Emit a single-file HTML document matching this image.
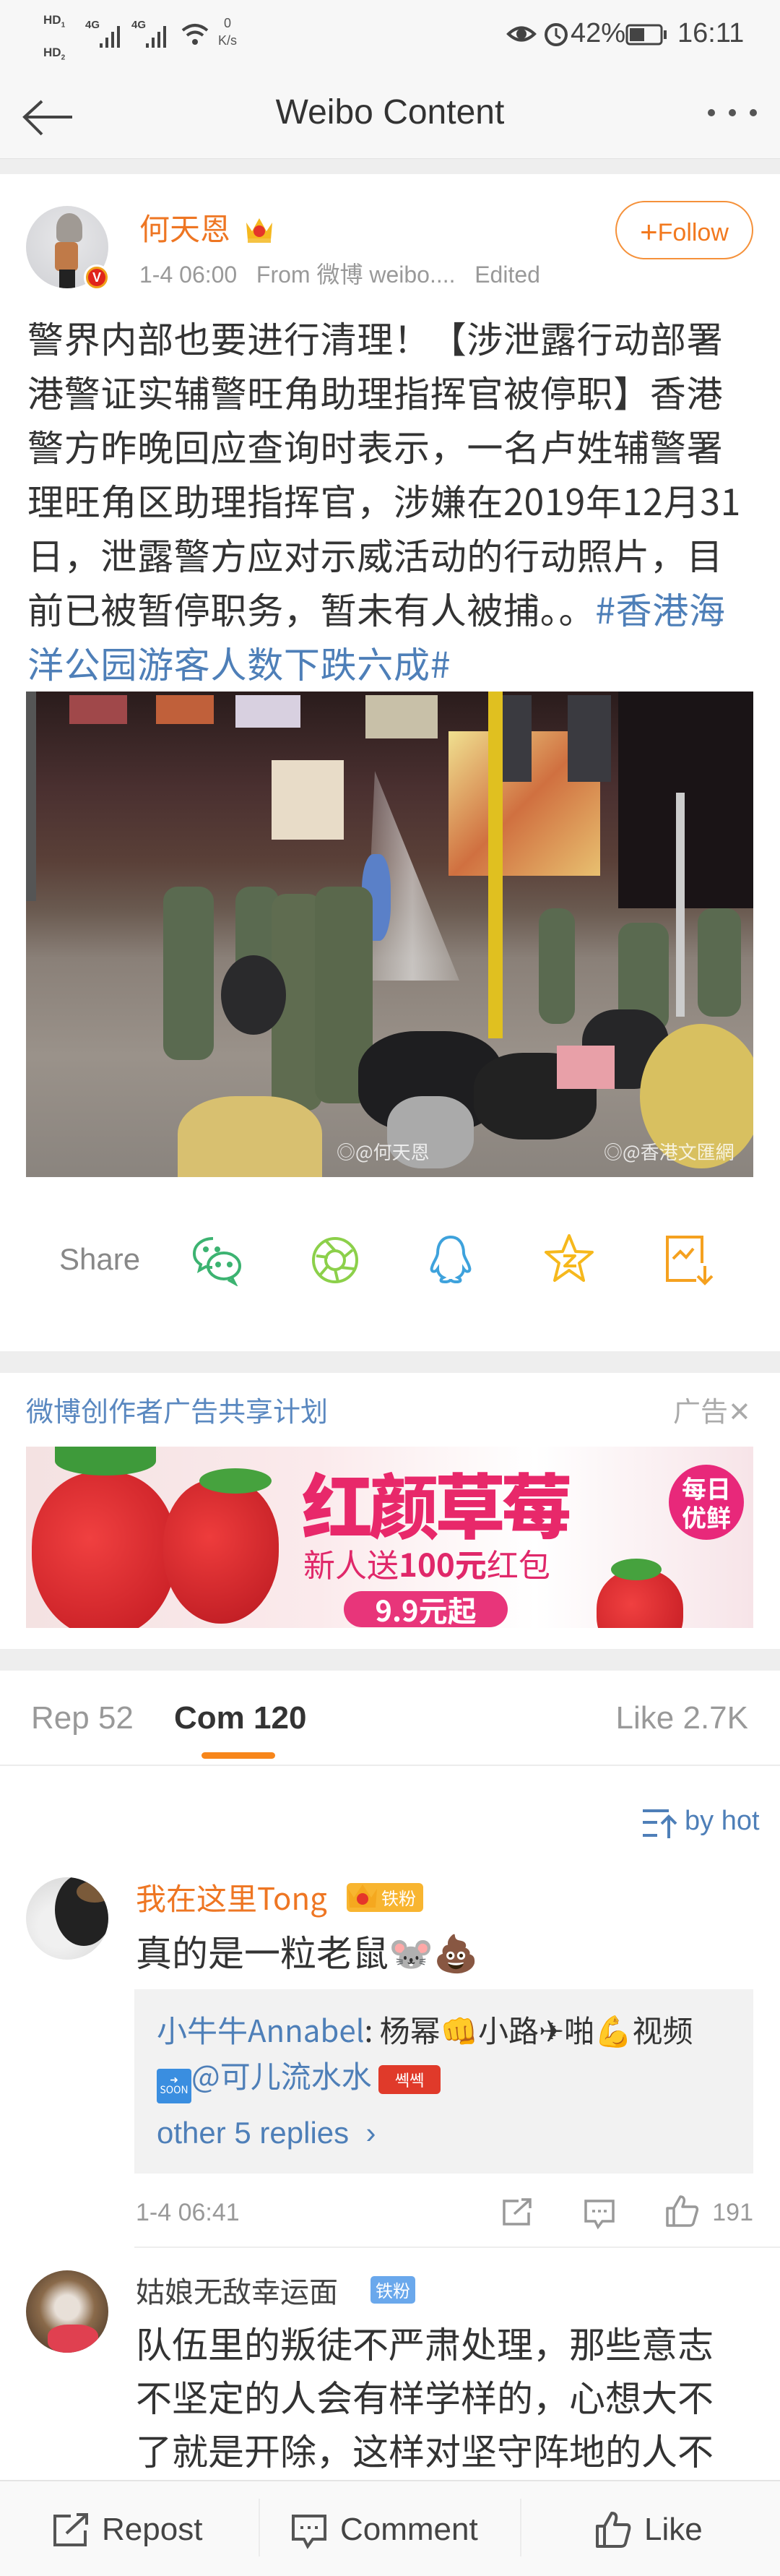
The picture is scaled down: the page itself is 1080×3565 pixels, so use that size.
<!DOCTYPE html>
<html><head><meta charset="utf-8">
<style>
*{margin:0;padding:0;box-sizing:border-box}
body{width:1080px;height:3565px;position:relative;background:#fff;font-family:"Liberation Sans","Noto Sans CJK SC",sans-serif;color:#333;overflow:hidden}
.a{position:absolute;white-space:nowrap}
.cjk{font-family:"Noto Sans CJK SC","Liberation Sans",sans-serif}
</style></head><body>
<!-- status + nav -->
<div class="a" style="left:0;top:0;width:1080px;height:220px;background:#f7f7f7"></div>
<div class="a" style="left:0;top:219px;width:1080px;height:22px;background:#eeeeee;border-top:1px solid #e2e2e2"></div>
<div class="a" style="left:60px;top:18px;font-size:17px;font-weight:bold;color:#444;line-height:20px">HD<sub style="font-size:10px">1</sub><br><span style="position:relative;top:18px">HD<sub style="font-size:10px">2</sub></span></div>
<div class="a" style="left:118px;top:26px;font-size:15px;color:#444;font-weight:bold">4G</div>
<svg class="a" style="left:136px;top:30px" width="40" height="40"><rect x="2" y="30" width="4" height="6" fill="#444"/><rect x="10" y="22" width="4" height="14" fill="#444"/><rect x="18" y="14" width="4" height="22" fill="#444"/><rect x="26" y="6" width="4" height="30" fill="#444"/></svg>
<div class="a" style="left:182px;top:26px;font-size:15px;color:#444;font-weight:bold">4G</div>
<svg class="a" style="left:200px;top:30px" width="40" height="40"><rect x="2" y="30" width="4" height="6" fill="#444"/><rect x="10" y="22" width="4" height="14" fill="#444"/><rect x="18" y="14" width="4" height="22" fill="#444"/><rect x="26" y="6" width="4" height="30" fill="#444"/></svg>
<svg class="a" style="left:250px;top:28px" width="40" height="40"><path d="M3 14 Q20 0 37 14" stroke="#444" stroke-width="4" fill="none"/><path d="M9 21 Q20 12 31 21" stroke="#444" stroke-width="4" fill="none"/><circle cx="20" cy="30" r="4" fill="#444"/></svg>
<div class="a" style="left:302px;top:20px;font-size:18px;color:#555;line-height:24px;text-align:center">0<br>K/s</div>
<svg class="a" style="left:700px;top:30px" width="44" height="34"><path d="M4 17 Q22 0 40 17 Q22 34 4 17Z" stroke="#444" stroke-width="4" fill="none"/><circle cx="22" cy="17" r="7" fill="#444"/></svg>
<svg class="a" style="left:750px;top:26px" width="40" height="40"><circle cx="20" cy="22" r="14" stroke="#444" stroke-width="4" fill="none"/><path d="M20 13v10l6 4" stroke="#444" stroke-width="3" fill="none"/></svg>
<div class="a" style="left:790px;top:25px;font-size:38px;color:#444;line-height:42px">42%</div>
<svg class="a" style="left:866px;top:33px" width="58" height="30"><rect x="2" y="2" width="48" height="26" rx="4" stroke="#444" stroke-width="3" fill="none"/><rect x="6" y="6" width="20" height="18" fill="#444"/><rect x="53" y="9" width="4" height="12" fill="#444"/></svg>
<div class="a" style="left:938px;top:25px;font-size:38px;color:#444;line-height:42px">16:11</div>
<svg class="a" style="left:28px;top:130px" width="80" height="64"><path d="M72 26H6M30 4L6 26L30 50" stroke="#444" stroke-width="4" fill="none" transform="translate(0,6)"/></svg>
<div class="a" style="left:0;width:1080px;text-align:center;top:128px;font-size:48px;line-height:56px;color:#333">Weibo Content</div>
<svg class="a" style="left:975px;top:147px" width="80" height="20"><circle cx="10" cy="9" r="5" fill="#555"/><circle cx="39" cy="9" r="5" fill="#555"/><circle cx="68" cy="9" r="5" fill="#555"/></svg>

<!-- post header -->
<div class="a" style="left:36px;top:285px;width:114px;height:114px;border-radius:50%;background:radial-gradient(circle at 50% 40%,#e8e8ea,#cfd0d4);overflow:hidden">
<div class="a" style="left:42px;top:10px;width:36px;height:40px;border-radius:50% 50% 20% 20%;background:#a09a94"></div>
<div class="a" style="left:40px;top:50px;width:32px;height:40px;background:#c07a48;border-radius:6px"></div>
<div class="a" style="left:46px;top:88px;width:22px;height:26px;background:#222"></div>
</div>
<div class="a" style="left:116px;top:366px;width:36px;height:36px;border-radius:50%;background:#f0a11b;border:3px solid #fff"><div style="margin:3px;width:24px;height:24px;border-radius:50%;background:#e0251b;color:#fff;font-size:18px;font-weight:bold;text-align:center;line-height:24px">V</div></div>
<div class="a cjk" style="left:193px;top:287px;font-size:42px;line-height:56px;color:#ee7623">何天恩</div>
<svg class="a" style="left:337px;top:296px" width="44" height="42"><path d="M4 12L12 24L22 6L32 24L40 12L38 36H6Z" fill="#f5b81f"/><circle cx="22" cy="24" r="8" fill="#e5352a"/><rect x="6" y="34" width="32" height="6" fill="#f5c342"/></svg>
<div class="a" style="left:852px;top:278px;width:191px;height:81px;border:2px solid #f5913a;border-radius:41px;color:#f2791f;font-size:34px;line-height:77px;text-align:center"><span style="font-size:42px;position:relative;top:2px">+</span>Follow</div>
<div class="a" style="left:193px;top:357px;font-size:32px;line-height:42px;color:#999">1-4 06:00&nbsp;&nbsp;&nbsp;From <span class="cjk">微博</span> weibo....&nbsp;&nbsp;&nbsp;Edited</div>

<!-- body -->
<div class="a cjk" style="left:38px;top:430px;font-size:50px;line-height:75px;letter-spacing:0.7px;color:#333">
<div>警界内部也要进行清理！【涉泄露行动部署</div>
<div>港警证实辅警旺角助理指挥官被停职】香港</div>
<div>警方昨晚回应查询时表示，一名卢姓辅警署</div>
<div>理旺角区助理指挥官，涉嫌在2019年12月31</div>
<div>日，泄露警方应对示威活动的行动照片，目</div>
<div>前已被暂停职务，暂未有人被捕。。<span style="color:#4e7fb8">#香港海</span></div>
<div style="color:#4e7fb8">洋公园游客人数下跌六成#</div>
</div>

<!-- photo -->
<div class="a" style="left:36px;top:957px;width:1007px;height:672px;overflow:hidden;background:linear-gradient(180deg,#2a1c1c 0%,#4a3030 20%,#5a4038 35%,#6a5a50 45%,#8a8078 55%,#9a928a 75%,#8a847e 100%)">
<div class="a" style="left:60px;top:5px;width:80px;height:40px;background:#a0484a"></div>
<div class="a" style="left:180px;top:5px;width:80px;height:40px;background:#c0603a"></div>
<div class="a" style="left:290px;top:5px;width:90px;height:45px;background:#d8d0e0"></div>
<div class="a" style="left:470px;top:5px;width:100px;height:60px;background:#c8c0a8"></div>
<div class="a" style="left:340px;top:95px;width:100px;height:110px;background:#e8dcc8"></div>
<div class="a" style="left:585px;top:55px;width:210px;height:200px;background:linear-gradient(135deg,#f0e090,#d07040,#e8c070)"></div>
<div class="a" style="left:650px;top:5px;width:50px;height:120px;background:#3a3a40"></div>
<div class="a" style="left:750px;top:5px;width:60px;height:120px;background:#3a3a40"></div>
<div class="a" style="left:820px;top:0;width:190px;height:300px;background:#1a1416"></div>
<div class="a" style="left:470px;top:110px;width:130px;height:290px;background:linear-gradient(90deg,rgba(240,240,240,.2),rgba(240,240,240,.6),rgba(240,240,240,.2));clip-path:polygon(10% 0,100% 100%,0 100%)"></div>
<div class="a" style="left:465px;top:225px;width:40px;height:120px;background:#5a80c8;border-radius:40%"></div>
<div class="a" style="left:640px;top:0;width:20px;height:480px;background:#e0c020"></div>
<div class="a" style="left:0;top:0;width:14px;height:290px;background:#555"></div>
<div class="a" style="left:900px;top:140px;width:12px;height:310px;background:#ccc"></div>
<div class="a" style="left:190px;top:270px;width:70px;height:240px;background:#5a6a50;border-radius:20px"></div>
<div class="a" style="left:290px;top:270px;width:60px;height:180px;background:#5a6a50;border-radius:20px"></div>
<div class="a" style="left:340px;top:280px;width:70px;height:300px;background:#5f6c50;border-radius:20px"></div>
<div class="a" style="left:400px;top:270px;width:80px;height:300px;background:#5a684c;border-radius:20px"></div>
<div class="a" style="left:270px;top:365px;width:90px;height:110px;background:#2a2a2c;border-radius:50%"></div>
<div class="a" style="left:710px;top:300px;width:50px;height:160px;background:#5a6a50;border-radius:20px"></div>
<div class="a" style="left:820px;top:320px;width:70px;height:150px;background:#5a6a50;border-radius:20px"></div>
<div class="a" style="left:930px;top:300px;width:60px;height:150px;background:#5a6a50;border-radius:20px"></div>
<div class="a" style="left:460px;top:470px;width:200px;height:140px;background:#1e1e20;border-radius:40%"></div>
<div class="a" style="left:620px;top:500px;width:170px;height:120px;background:#222;border-radius:40%"></div>
<div class="a" style="left:770px;top:440px;width:120px;height:110px;background:#262628;border-radius:40%"></div>
<div class="a" style="left:500px;top:560px;width:120px;height:100px;background:#aaa;border-radius:40%"></div>
<div class="a" style="left:735px;top:490px;width:80px;height:60px;background:#e8a0a8"></div>
<div class="a" style="left:850px;top:460px;width:170px;height:200px;background:#d8c060;border-radius:50%"></div>
<div class="a" style="left:210px;top:560px;width:200px;height:130px;background:#d8c070;border-radius:40% 40% 0 0"></div>
<div class="a cjk" style="left:430px;top:618px;font-size:26px;color:rgba(255,255,255,.8)">◎@何天恩</div>
<div class="a cjk" style="left:800px;top:618px;font-size:26px;color:rgba(255,255,255,.8)">◎@香港文匯網</div>
</div>

<!-- share row -->
<div class="a" style="left:82px;top:1718px;font-size:42px;line-height:50px;color:#888">Share</div>
<svg class="a" style="left:265px;top:1708px" width="72" height="72" fill="none" stroke="#3cb371" stroke-width="4"><path d="M30 6C15 6 4 15 4 27c0 7 4 12 9 15l-2 8 9-5c3 1 6 1 9 1"/><ellipse cx="45" cy="44" rx="22" ry="18"/><path d="M56 60l4 8-9-5"/><circle cx="20" cy="21" r="2" fill="#3cb371"/><circle cx="36" cy="21" r="2" fill="#3cb371"/><circle cx="37" cy="42" r="2" fill="#3cb371"/><circle cx="53" cy="42" r="2" fill="#3cb371"/></svg>
<svg class="a" style="left:430px;top:1710px" width="68" height="68" fill="none" stroke="#8cd04a" stroke-width="4"><circle cx="34" cy="34" r="30"/><circle cx="34" cy="34" r="13"/><path d="M22 8L34 21M58 20L46 30M60 46L42 44M38 64L34 47M12 56L24 42M8 28L24 30"/></svg>
<svg class="a" style="left:594px;top:1708px" width="60" height="72" fill="none" stroke="#3ea2dc" stroke-width="4"><path d="M30 4C18 4 12 14 12 26c0 6-6 12-8 20-2 6 4 8 8 2 0 6 4 10 8 12-4 2-6 6 2 6 6 0 8-2 8-4 0 2 2 4 8 4 8 0 6-4 2-6 4-2 8-6 8-12 4 6 10 4 8-2-2-8-8-14-8-20C48 14 42 4 30 4Z"/></svg>
<svg class="a" style="left:752px;top:1706px" width="72" height="72" fill="none" stroke="#f6b81c" stroke-width="4" stroke-linejoin="round"><path d="M36 4L45 26L68 27L50 42L56 66L36 52L16 66L22 42L4 27L27 26Z"/><path d="M28 32H44L30 46H46"/></svg>
<svg class="a" style="left:920px;top:1708px" width="68" height="72" fill="none" stroke="#f5a11f" stroke-width="4"><path d="M44 64H4V4H52V40"/><path d="M12 34L22 24L30 32L40 20"/><path d="M56 44V68M46 58L56 68L66 58"/></svg>

<div class="a" style="left:0;top:1870px;width:1080px;height:30px;background:#eeeeee"></div>

<!-- ad -->
<div class="a cjk" style="left:36px;top:1929px;font-size:38px;line-height:44px;color:#5a88c0">微博创作者广告共享计划</div>
<div class="a cjk" style="left:932px;top:1929px;font-size:38px;line-height:44px;color:#aaa">广告✕</div>
<div class="a" style="left:36px;top:2002px;width:1007px;height:251px;overflow:hidden;background:linear-gradient(90deg,#f4e2e2,#fbeaec 40%,#fff 70%,#f7e4e8)">
<div class="a" style="left:8px;top:35px;width:200px;height:230px;border-radius:45% 45% 50% 50%;background:radial-gradient(circle at 40% 40%,#f04040,#c01820)"></div>
<div class="a" style="left:190px;top:45px;width:160px;height:200px;border-radius:45% 45% 50% 50%;background:radial-gradient(circle at 40% 40%,#ee3c3c,#b81820)"></div>
<div class="a" style="left:40px;top:0;width:140px;height:40px;background:#3e9a3a;border-radius:0 0 50% 50%"></div>
<div class="a" style="left:240px;top:30px;width:100px;height:35px;background:#46a23e;border-radius:50%"></div>
<div class="a" style="left:790px;top:170px;width:120px;height:120px;border-radius:45%;background:radial-gradient(circle at 40% 40%,#f04040,#c01820)"></div>
<div class="a" style="left:810px;top:155px;width:70px;height:30px;background:#46a23e;border-radius:50%"></div>
<div class="a cjk" style="left:382px;top:22px;font-size:98px;line-height:110px;font-weight:900;color:#e8286a;letter-spacing:-6px">红颜草莓</div>
<div class="a cjk" style="left:384px;top:135px;font-size:44px;line-height:52px;color:#e0286a">新人送<b>100元</b>红包</div>
<div class="a" style="left:440px;top:200px;width:227px;height:50px;border-radius:25px;background:#e8357a;color:#fff;font-size:40px;line-height:50px;text-align:center;font-weight:bold"><span class="cjk">9.9元起</span></div>
<div class="a cjk" style="left:890px;top:25px;width:104px;height:104px;border-radius:50%;background:#e8287a;color:#fff;font-size:34px;line-height:40px;text-align:center;padding-top:12px;font-weight:bold">每日<br>优鲜</div>
</div>
<div class="a" style="left:0;top:2282px;width:1080px;height:30px;background:#eeeeee"></div>

<!-- tabs -->
<div class="a" style="left:43px;top:2352px;font-size:44px;line-height:52px;color:#999">Rep 52</div>
<div class="a" style="left:241px;top:2352px;font-size:44px;line-height:52px;color:#333;font-weight:bold">Com 120</div>
<div class="a" style="right:44px;top:2352px;font-size:44px;line-height:52px;color:#999">Like 2.7K</div>
<div class="a" style="left:279px;top:2425px;width:102px;height:9px;border-radius:5px;background:#f7861b"></div>
<div class="a" style="left:0;top:2442px;width:1080px;height:2px;background:#ececec"></div>
<svg class="a" style="left:888px;top:2502px" width="52" height="44" fill="none" stroke="#4e7fb8" stroke-width="4"><path d="M2 4H38M2 20H22M2 38H22M38 42V12M28 22L38 12L48 22"/></svg>
<div class="a" style="left:948px;top:2498px;font-size:38px;line-height:44px;color:#4e7fb8">by hot</div>

<!-- comment 1 -->
<div class="a" style="left:36px;top:2598px;width:114px;height:114px;border-radius:50%;background:radial-gradient(circle at 40% 60%,#f0f0f0 30%,#cfcfcf);overflow:hidden"><div class="a" style="left:40px;top:-5px;width:80px;height:100px;border-radius:50%;background:#222"></div><div class="a" style="left:70px;top:5px;width:50px;height:30px;background:#7a5a3a;border-radius:50%"></div></div>
<div class="a cjk" style="left:188px;top:2600px;font-size:42px;line-height:52px;color:#ee7623">我在这里Tong</div>
<div class="a" style="left:480px;top:2606px;width:106px;height:40px;border-radius:6px;background:#f8b530;color:#fff;font-size:24px;line-height:40px;padding-left:48px"><span class="cjk">铁粉</span></div>
<svg class="a" style="left:478px;top:2600px" width="50" height="50"><path d="M4 14L12 26L24 8L36 26L44 14L42 40H6Z" fill="#f5a81f"/><circle cx="24" cy="28" r="8" fill="#e5352a"/></svg>
<div class="a cjk" style="left:188px;top:2668px;font-size:50px;line-height:64px;color:#333">真的是一粒老鼠🐭💩</div>
<div class="a" style="left:186px;top:2753px;width:857px;height:255px;background:#f2f2f2"></div>
<div class="a cjk" style="left:217px;top:2783px;font-size:42px;line-height:52px;color:#333"><span style="color:#4e7fb8">小牛牛Annabel</span>: 杨幂👊小路✈啪💪视频</div>
<div class="a cjk" style="left:217px;top:2846px;font-size:42px;line-height:52px;color:#4e7fb8"><span style="display:inline-block;width:48px;height:48px;background:#3a8ee0;color:#fff;font-size:14px;line-height:14px;text-align:center;vertical-align:-8px;padding-top:8px;border-radius:4px">➜<br>SOON</span>@可儿流水水 <span style="display:inline-block;width:86px;height:40px;background:#e03a2a;border-radius:6px;color:#fff;font-size:22px;line-height:40px;text-align:center;vertical-align:2px">쎅쎅</span></div>
<div class="a" style="left:217px;top:2926px;font-size:42px;line-height:52px;color:#4e7fb8">other 5 replies &nbsp;›</div>
<div class="a" style="left:188px;top:3040px;font-size:34px;line-height:44px;color:#999">1-4 06:41</div>
<svg class="a" style="left:694px;top:3042px" width="44" height="40" fill="none" stroke="#999" stroke-width="3.5"><path d="M24 4H4V36H38V20M18 22L40 2M28 2H40V14"/></svg>
<svg class="a" style="left:808px;top:3042px" width="44" height="44" fill="none" stroke="#999" stroke-width="3.5"><path d="M3 4H41V32H26L20 40L16 32H3Z"/><path d="M12 18H16M20 18H24M28 18H32"/></svg>
<svg class="a" style="left:920px;top:3036px" width="48" height="48" fill="none" stroke="#999" stroke-width="3.5" stroke-linejoin="round"><path d="M4 20H13V44H4ZM13 20L22 4C27 4 28 8 27 12L25 18H42C45 18 46 21 45 24L40 41C39 43 38 44 35 44H13"/></svg>
<div class="a" style="right:37px;top:3040px;font-size:34px;line-height:44px;color:#999">191</div>
<div class="a" style="left:186px;top:3109px;width:894px;height:2px;background:#eeeeee"></div>

<!-- comment 2 -->
<div class="a" style="left:36px;top:3142px;width:114px;height:114px;border-radius:50%;background:radial-gradient(circle at 50% 45%,#e8e0d8 20%,#8a6a4a 45%,#3a2a20);overflow:hidden"><div class="a" style="left:30px;top:75px;width:70px;height:40px;background:#e04050;border-radius:40%"></div></div>
<div class="a cjk" style="left:188px;top:3144px;font-size:40px;line-height:50px;color:#444">姑娘无敌幸运面</div>
<div class="a" style="left:513px;top:3150px;width:62px;height:38px;border-radius:5px;background:#6aa8ec;color:#fff;font-size:24px;line-height:38px;text-align:center"><span class="cjk">铁粉</span></div>
<div class="a cjk" style="left:188px;top:3205px;font-size:50px;line-height:74px;color:#333">
<div>队伍里的叛徒不严肃处理，那些意志</div>
<div>不坚定的人会有样学样的，心想大不</div>
<div>了就是开除，这样对坚守阵地的人不</div>
</div>

<!-- bottom bar -->
<div class="a" style="left:0;top:3432px;width:1080px;height:133px;background:#f9f9f9;border-top:2px solid #e4e4e4"></div>
<div class="a" style="left:358px;top:3458px;width:2px;height:80px;background:#ececec"></div>
<div class="a" style="left:720px;top:3458px;width:2px;height:80px;background:#ececec"></div>
<svg class="a" style="left:72px;top:3478px" width="52" height="48" fill="none" stroke="#555" stroke-width="4"><path d="M26 4H4V44H46V24M20 28L48 2M34 2H48V16"/></svg>
<div class="a" style="left:141px;top:3474px;font-size:44px;line-height:54px;color:#444">Repost</div>
<svg class="a" style="left:403px;top:3478px" width="50" height="52" fill="none" stroke="#555" stroke-width="4"><path d="M3 4H47V36H30L23 46L18 36H3Z"/><path d="M13 20H17M23 20H27M33 20H37"/></svg>
<div class="a" style="left:471px;top:3474px;font-size:44px;line-height:54px;color:#444">Comment</div>
<svg class="a" style="left:824px;top:3474px" width="50" height="54" fill="none" stroke="#555" stroke-width="4" stroke-linejoin="round"><path d="M3 22H13V50H3ZM13 22L23 4C29 4 30 8 29 13L27 20H44C47 20 48 23 47 27L42 46C41 49 39 50 36 50H13"/></svg>
<div class="a" style="left:892px;top:3474px;font-size:44px;line-height:54px;color:#444">Like</div>
</body></html>
